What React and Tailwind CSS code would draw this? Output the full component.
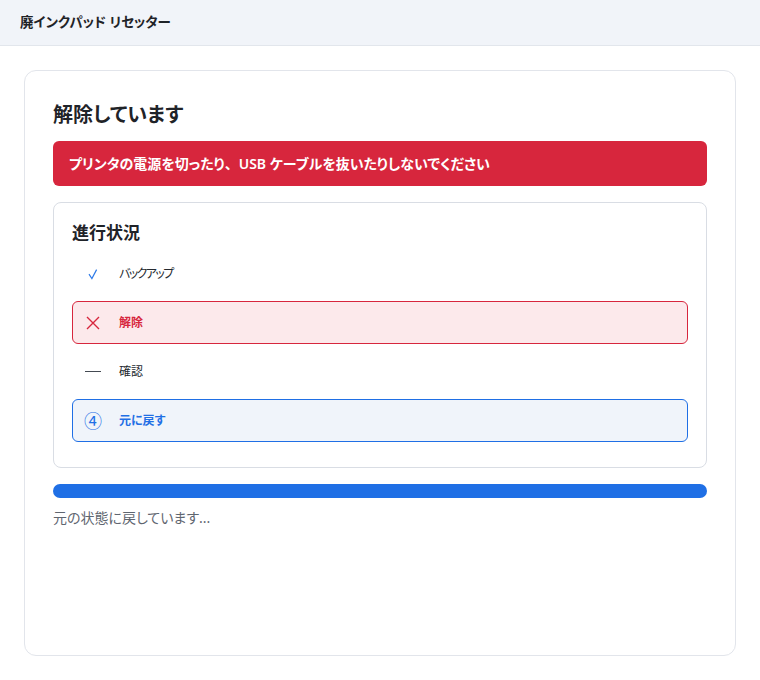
const steps = [
  { label: 'バックアップ', state: 'done', tight: true },
  { label: '解除', state: 'error' },
  { label: '確認', state: 'pending' },
  { label: '元に戻す', state: 'active', num: '④' },
]

const StepIcon = ({ state, num }) => {
  if (state === 'done') {
    return (
      <svg viewBox="0 0 16 16" className="w-4 h-4" fill="none" stroke="#2f7be8" strokeWidth="1.2">
        <path d="M4 8.2 L6.9 12.6 L11.6 3.6" />
      </svg>
    )
  }
  if (state === 'error') {
    return (
      <svg viewBox="0 0 16 16" className="w-4 h-4" fill="none" stroke="#d7263d" strokeWidth="1.4">
        <path d="M2 2 L14 14 M14 2 L2 14" />
      </svg>
    )
  }
  if (state === 'pending') {
    return <span className="block w-4 h-px bg-[#444a52]"></span>
  }
  return <span className="text-[18px] leading-none font-normal text-[#1f6fe5]">{num}</span>
}

const StepRow = ({ step }) => {
  const base = 'flex items-center h-[43px] pl-3 pr-3 rounded-md border'
  let tone = 'border-transparent text-[#24292f]'
  if (step.state === 'error') tone = 'border-[#d7263d] bg-[#fce9eb] text-[#d7263d] font-semibold'
  if (step.state === 'active') tone = 'border-[#1f6fe5] bg-[#f0f4fa] text-[#1f6fe5] font-semibold'
  return (
    <div className={`${base} ${tone}`}>
      <div className="w-4 flex justify-center items-center">
        <StepIcon state={step.state} num={step.num} />
      </div>
      <span className={`ml-[18px] text-xs ${step.tight ? 'tracking-[-1.6px]' : ''}`}>{step.label}</span>
    </div>
  )
}

export default function App() {
  return (
    <div className="h-screen flex flex-col bg-white text-[#1f2328] font-['Noto_Sans','Noto_Sans_CJK_JP',sans-serif] [font-feature-settings:'palt']">
      {/* HEADER */}
      <header className="h-[46px] shrink-0 flex items-center px-5 bg-[#f1f4f9] border-b border-[#e2e6ec]">
        <h1 className="text-[13.5px] font-semibold">廃インクパッド リセッター</h1>
      </header>

      {/* MAIN */}
      <main className="flex-1 p-6 min-h-0">
        <div className="h-full rounded-xl border border-[#e2e5eb] p-7">
          <h2 className="text-xl leading-8 font-semibold">解除しています</h2>

          <div className="mt-2.5 rounded-md bg-[#d7263d] px-4 py-3 text-white text-sm leading-[21px] font-semibold">
            プリンタの電源を切ったり<span className="[font-feature-settings:normal]">、</span>USB ケーブルを抜いたりしないでください
          </div>

          <div className="mt-4 rounded-lg border border-[#d9dde4] px-[18px] pt-[18px] pb-[25px]">
            <h3 className="text-[17px] leading-6 font-semibold">進行状況</h3>
            <div className="mt-[7px] flex flex-col gap-1.5">
              {steps.map((s) => (
                <StepRow key={s.label} step={s} />
              ))}
            </div>
          </div>

          <div className="mt-4 h-3.5 rounded-full bg-[#1f6fe5]"></div>
          <p className="mt-2.5 text-sm text-[#5f6670]">元の状態に戻しています...</p>
        </div>
      </main>
    </div>
  )
}
